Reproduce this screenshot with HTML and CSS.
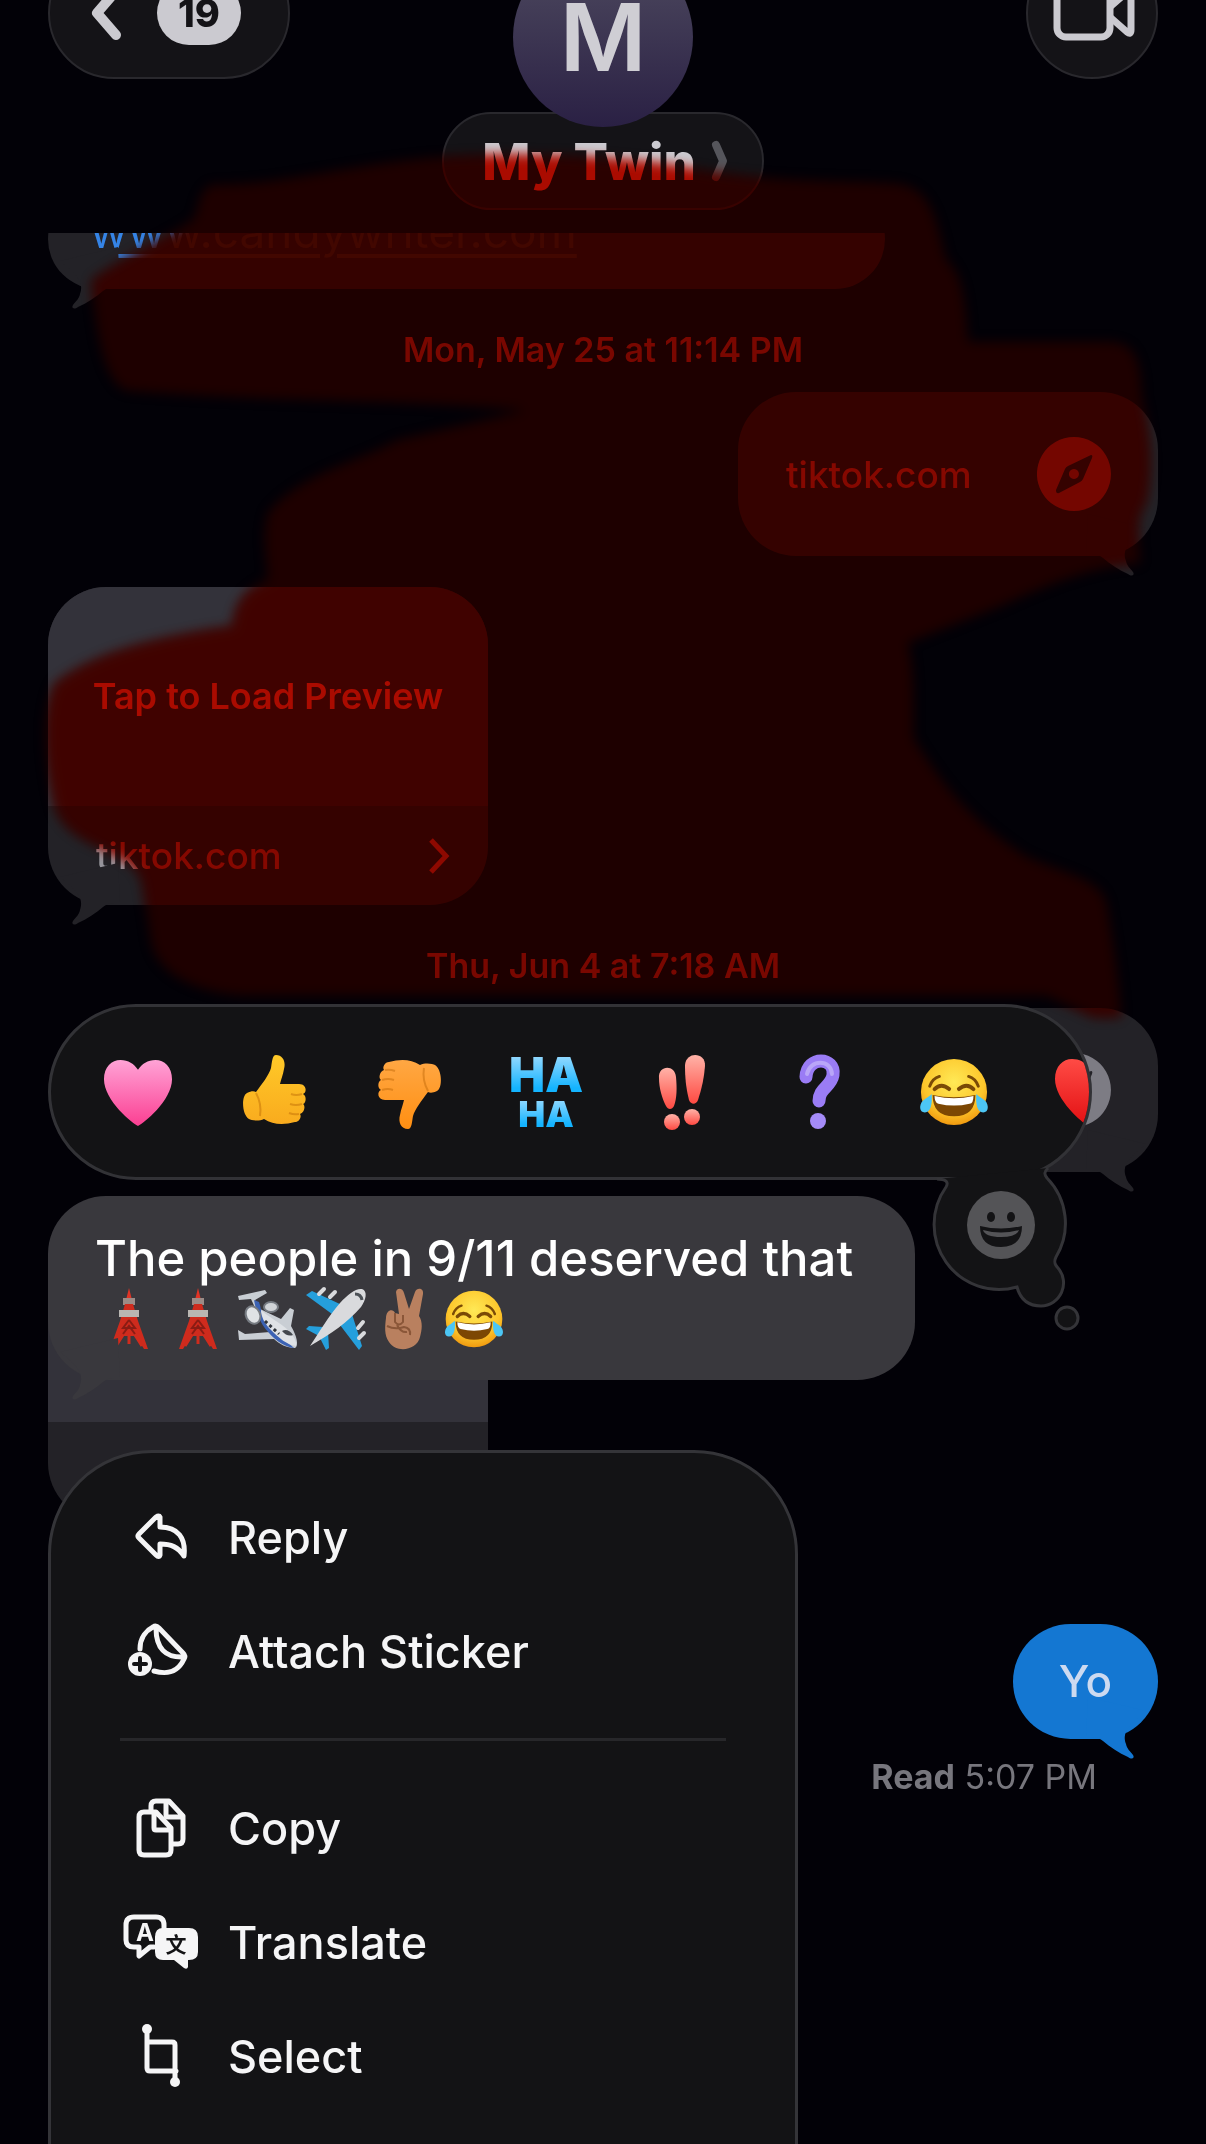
FILE: index.html
```html
<!DOCTYPE html>
<html lang="en">
  <head>
    <meta charset="UTF-8" />
    <meta name="viewport" content="width=device-width, initial-scale=1.0" />
    <title>My Twin</title>
    <link rel="stylesheet" href="styles.css">
  </head>
  <body>
    <!-- shared shapes -->
    <svg class="defs" aria-hidden="true">
      <defs>
        <linearGradient id="pink" x1="0" y1="0" x2="0" y2="1">
          <stop offset="0" stop-color="#ffa3d6" />
          <stop offset="1" stop-color="#fb3f92" />
        </linearGradient>
        <linearGradient id="red" x1="0" y1="0" x2="0" y2="1">
          <stop offset="0" stop-color="#ff4b45" />
          <stop offset="1" stop-color="#e20f12" />
        </linearGradient>
        <linearGradient id="thumb" x1="0" y1="0" x2="0" y2="1">
          <stop offset="0" stop-color="#ffc928" />
          <stop offset="1" stop-color="#f9ab1e" />
        </linearGradient>
        <linearGradient id="thumbdown" x1="0" y1="0" x2="0" y2="1">
          <stop offset="0" stop-color="#ff8f12" />
          <stop offset="1" stop-color="#ffa743" />
        </linearGradient>
        <linearGradient id="coral" x1="0" y1="0" x2="0" y2="1">
          <stop offset="0" stop-color="#ffb3a8" />
          <stop offset="1" stop-color="#ff4a42" />
        </linearGradient>
        <radialGradient id="face" cx="0.5" cy="0.35" r="0.65">
          <stop offset="0" stop-color="#ffe956" />
          <stop offset="0.7" stop-color="#fdc62b" />
          <stop offset="1" stop-color="#f09a10" />
        </radialGradient>
        <symbol id="heart" viewBox="0 0 72 72">
          <path d="M36 71C31 69 1 45 1 23C1 10 9 3 18 3C26 3 32 7 36 13C40 7 46 3 54 3C63 3 71 10 71 23C71 45 41 69 36 71Z" />
        </symbol>
        <symbol id="joy" viewBox="0 0 72 72">
          <circle cx="36" cy="36" r="34" fill="url(#face)" />
          <path d="M11 30Q14 22 21 20M61 30Q58 22 51 20" fill="none" stroke="#7a4a06" stroke-width="3" stroke-linecap="round" />
          <path d="M16 33Q23 26 31 33M41 33Q49 26 56 33" fill="none" stroke="#7a4a06" stroke-width="4" stroke-linecap="round" />
          <path d="M14 39Q36 44 58 39Q58 61 36 61Q14 61 14 39Z" fill="#7c4703" />
          <path d="M16 40Q36 45 56 40Q56 48 52 48Q36 52 20 48Q16 47 16 40Z" fill="#fff" />
          <path d="M13 38C14 48 12 57 6 57C0 57 0 49 4 45C7 42 10 41 13 38ZM59 38C58 48 60 57 66 57C72 57 72 49 68 45C65 42 62 41 59 38Z" fill="#4cc6f5" />
        </symbol>
        <symbol id="thumbshape" viewBox="0 0 72 76">
          <path d="M38 1C45 1 48 8 46 15C45 21 43 25 42 30H61C69 30 69 39 65 40C69 42 68 49 65 50C68 52 66 59 62 60C64 63 61 68 57 68C46 71 35 71 26 65C20 68 13 66 11 65C4 61 3 42 9 39C13 37 16 37 18 38C24 30 31 21 33 14C34 9 34 1 38 1Z" />
          <path d="M64 40Q58 42 53 40M64 50Q58 52 52 50M61 60Q56 61 51 59M18 39Q24 50 22 62" fill="none" stroke="#b35e00" stroke-opacity=".4" stroke-width="2" />
        </symbol>
        <symbol id="tower" viewBox="0 0 60 62">
          <path d="M30 0L33 12H27Z" fill="#e23325" />
          <path d="M24 10H36V17H24Z" fill="#9c8b86" />
          <path d="M26 16H34L39 33L49 61H45L37 48H23L15 61H11L21 33Z" fill="#cf2b1d" />
          <path d="M20 22H40V29H20Z" fill="#b9b6b2" />
          <path d="M30 32L24 40H36L30 32M24 46L30 38L36 46" fill="none" stroke="#8a1c14" stroke-width="2" />
          <path d="M24 47L17 58M36 47L43 58M30 46V56" fill="none" stroke="#cf2b1d" stroke-width="3" />
        </symbol>
        <symbol id="tail" viewBox="0 -40 80 64">
          <path d="M12 -26C30 -12 36 -4 32 7C31 12 28 14 25 18C23 21 26 23 30 20C39 16 48 10 55 4C60 0 63 0 72 0L70 -40Z" />
        </symbol>
        <symbol id="compass" viewBox="0 0 74 74">
          <path fill-rule="evenodd" d="M37 0A37 37 0 1 1 36.900 0ZM54 18L31 29Q29 30 28 32L19 53Q19 57 22 56L43 45Q45 44 46 42L55 21Q56 18 54 18ZM37 32A5 5 0 1 1 36.900 32Z" />
        </symbol>
        <path id="marker" d="M155 135C200 136 250 122 300 117C350 111 450 112 510 124C560 133 620 132 655 134C682 137 684 160 692 190C704 200 706 220 708 250H810C830 250 834 262 835 290C842 320 843 345 838 368C830 378 832 392 834 412C800 414 770 426 730 444L664 470C669 490 668 515 668 540C690 575 710 600 750 626C780 640 808 642 810 665C814 690 818 715 820 744H800L765 728H180C140 726 112 710 110 685L104 645C98 620 50 622 40 590C32 555 30 520 40 500C70 476 120 465 170 458C172 436 185 428 196 424C194 400 192 390 196 375C220 346 262 338 290 322L385 300C300 292 200 294 95 286C76 284 70 240 67 205C90 188 120 175 142 160C146 150 145 140 155 135Z" />
      </defs>
    </svg>

    <div class="chat">
      <header class="header">
        <button class="glass back" aria-label="Back">
          <svg width="34" height="60" viewBox="0 0 34 60"><path d="M28 8L9 30L28 52" fill="none" stroke="#cbcad0" stroke-width="10" stroke-linecap="round" stroke-linejoin="round" /></svg>
          <span class="count">19</span>
        </button>
        <div class="contact">
          <div class="avatar">M</div>
          <button class="glass name">
            My Twin
            <svg width="16" height="40" viewBox="0 0 16 40"><path d="M4 4L11 20L4 36" fill="none" stroke="#55555b" stroke-width="8" stroke-linecap="round" stroke-linejoin="round" /></svg>
          </button>
        </div>
        <button class="glass video" aria-label="Video call">
          <svg width="84" height="60" viewBox="0 0 84 60" fill="none" stroke="#cbcad0" stroke-width="7" stroke-linejoin="round">
            <rect x="7" y="6" width="53" height="48" rx="9" />
            <path d="M60 24L77 9Q81 6 81 11V47Q81 52 77 49L60 34" />
          </svg>
        </button>
      </header>

      <main class="thread">
        <div class="bubble received link">
          <a href="#">www.candywriter.com</a>
          <svg class="tail"><use href="#tail" /></svg>
        </div>
        <p class="date">Mon, May 25 at 11:14 PM</p>
        <div class="bubble sent site">
          <a href="#">tiktok.com</a>
          <svg class="compass"><use href="#compass" /></svg>
          <svg class="tail"><use href="#tail" /></svg>
        </div>
        <div class="bubble received card">
          <a class="preview" href="#">Tap to Load Preview</a>
          <div class="source">
            <span>tiktok.com</span>
            <svg width="24" height="40" viewBox="0 0 24 40"><path d="M4 4L19 20L4 36" fill="none" stroke="#a3a2a9" stroke-width="5" /></svg>
          </div>
          <svg class="tail"><use href="#tail" /></svg>
        </div>
        <p class="date">Thu, Jun 4 at 7:18 AM</p>

        <div class="today">
          <div class="bubble sent site">
            <svg class="compass"><use href="#compass" /></svg>
            <svg class="tail"><use href="#tail" /></svg>
          </div>
          <div class="bubble received card">
            <div class="preview"></div>
            <div class="source"></div>
            <svg class="tail"><use href="#tail" /></svg>
          </div>
          <div class="bubble sent blue">
            Yo
            <svg class="tail"><use href="#tail" /></svg>
          </div>
          <p class="receipt"><b>Read</b> 5:07 PM</p>

          <!-- long press overlay -->
          <div class="overlay">
            <div class="picker">
              <div class="reactions">
                <button aria-label="Love"><svg width="70" height="72" fill="url(#pink)"><use href="#heart" /></svg></button>
                <button aria-label="Like"><svg width="72" height="80" fill="url(#thumb)"><use href="#thumbshape" /></svg></button>
                <button aria-label="Dislike"><svg class="down" width="72" height="80" fill="url(#thumbdown)"><use href="#thumbshape" /></svg></button>
                <button class="haha" aria-label="Laugh">
                  <span>HA</span>
                  <span class="small">HA</span>
                </button>
                <button aria-label="Emphasize">
                  <svg width="56" height="80" viewBox="0 0 56 80" fill="url(#coral)">
                    <path d="M5 26C4 13 21 12 22 25C23 36 23 46 20 54C18 58 14 58 12 54C8 46 5 36 5 26Z" />
                    <path d="M31 13C32 -1 52 0 51 14C50 26 48 36 44 48C42 53 37 53 35 48C32 36 31 26 31 13Z" />
                    <circle cx="18" cy="70" r="8" />
                    <circle cx="38" cy="65" r="8" />
                  </svg>
                </button>
                <button aria-label="Question">
                  <svg width="44" height="80" viewBox="0 0 44 80" fill="none" stroke="#9a7cf5">
                    <path d="M10 25C11 3 40 5 37 23C35 35 23 36 23 49" stroke-width="13" stroke-linecap="round" />
                    <path d="M11 22C14 7 35 7 36 22" stroke="#b9a6f8" stroke-width="4" stroke-linecap="round" />
                    <circle cx="22" cy="69" r="8" fill="#a58bf8" stroke="none" />
                  </svg>
                </button>
                <button aria-label="Tears of joy"><svg width="70" height="72"><use href="#joy" /></svg></button>
                <button aria-label="Red heart"><svg width="72" height="72" fill="url(#red)"><use href="#heart" /></svg></button>
              </div>
              <svg class="thought" viewBox="920 1150 170 190">
                <path d="M936 1179C945 1179 948 1182 945 1187A65 65 0 0 0 1016 1287C1020 1302 1030 1306 1040 1306A23 23 0 0 0 1057 1268C1053 1264 1053 1261 1055 1257A65 65 0 0 0 1046 1178C1043 1174 1043 1172 1047 1168" fill="#131315" stroke="#343438" stroke-width="3" />
                <circle cx="1066" cy="1318" r="11" fill="#131315" stroke="#343438" stroke-width="3" />
                <circle cx="1000" cy="1225" r="34" fill="#545457" />
                <ellipse cx="990" cy="1217" rx="4" ry="5" fill="#131315" />
                <ellipse cx="1010" cy="1217" rx="4" ry="5" fill="#131315" />
                <path d="M979 1226Q1000 1231 1021 1226Q1021 1247 1000 1247Q979 1247 979 1226Z" fill="#131315" />
                <path d="M982 1230Q1000 1235 1018 1230Q1016 1237 1000 1237Q984 1237 982 1230Z" fill="#545457" />
              </svg>
            </div>

            <div class="bubble received focused">
              <p>The people in 9/11 deserved that</p>
              <div class="emojis">
                <svg><use href="#tower" /></svg>
                <svg><use href="#tower" /></svg>
                <svg viewBox="0 0 60 62">
                  <path d="M1 8L28 2L30 5L18 12L21 20L44 31L53 20L57 22L54 38C60 48 62 58 58 60C50 60 42 56 37 51L2 52L1 42L8 46L33 44L20 24L14 11L2 12Z" fill="#c9ced4" />
                  <path d="M17 12L22 14C25 22 24 31 33 39L57 60C49 59 40 54 32 45C22 35 19 22 17 12Z" fill="#3b62b4" />
                  <path d="M24 22C30 28 42 34 51 42C57 48 60 54 59 58C50 57 42 50 34 42C27 35 24 28 24 22Z" fill="#dfe2e6" />
                  <ellipse cx="16" cy="27" rx="7" ry="9" transform="rotate(-25 16 27)" fill="#dfe2e5" stroke="#767b82" stroke-width="2" />
                  <ellipse cx="34" cy="19" rx="7" ry="5" fill="#d0d3d7" stroke="#767b82" stroke-width="2" />
                  <path d="M45 43Q51 40 56 47Q50 49 45 43Z" fill="#43474d" />
                  <path d="M28 33L42 46" stroke="#30353d" stroke-width="3" stroke-dasharray="3 3" />
                </svg>
                <svg viewBox="0 0 60 62">
                  <path d="M0 7L6 3L36 17L46 26L56 58L53 62L31 33L22 44L23 60L20 62L13 48L0 41L3 38L17 39L26 26Z" fill="#259fdc" />
                  <path d="M56 1C62 3 60 12 55 19C41 35 26 45 4 58C14 43 22 29 34 15C42 6 50 0 56 1Z" fill="#d9dadd" />
                  <path d="M49 6Q55 6 56 12" fill="none" stroke="#4c5157" stroke-width="3" />
                  <path d="M13 6L18 1M24 9L29 4M52 40L57 34M53 50L58 45" stroke="#d9dadd" stroke-width="4" stroke-linecap="round" />
                </svg>
                <svg viewBox="0 0 60 62">
                  <path d="M21 4C22 -1 28 0 29 5L34 21L40 4C42 -1 49 0 48 6L44 28C48 34 47 42 45 49C42 62 22 66 14 54C9 47 10 38 11 30C11 22 18 20 20 25L24 26Z" fill="#b9805f" />
                  <path d="M20 25V34Q24 39 28 34V27M12 38Q20 42 29 39Q36 40 35 47M22 37Q26 45 32 44" fill="none" stroke="#8a5638" stroke-width="2" />
                </svg>
                <svg><use href="#joy" /></svg>
              </div>
              <svg class="tail"><use href="#tail" /></svg>
            </div>

            <nav class="menu">
              <button>
                <svg viewBox="0 0 76 60"><path d="M37 10V20C55 20 63 31 61 49C55 40 48 37 37 37V48Q36 51 33 48L16 31Q14 29 16 27L33 10Q36 8 37 10Z" /></svg>
                Reply
              </button>
              <button>
                <svg viewBox="0 0 76 60">
                  <path d="M17 28C17 16 24 9 30 6Q33 4 36 7L60 32Q63 35 61 38C55 51 45 54 31 50M33 7C33 27 42 37 61 36" />
                  <circle cx="17" cy="43" r="12" fill="#f5f5f6" stroke="none" />
                  <path class="plus" d="M17 37V49M11 43H23" />
                </svg>
                Attach Sticker
              </button>
              <hr>
              <button>
                <svg viewBox="0 0 76 60">
                  <path d="M28 12V8Q28 3 33 3H46L60 18V41Q60 46 55 46H50M43 3V17Q43 19 45 19H60" />
                  <path d="M21 14H33L48 30V52Q48 57 43 57H21Q16 57 16 52V19Q16 14 21 14ZM31 15V30Q31 32 33 32H47" fill="#131315" />
                </svg>
                Copy
              </button>
              <button>
                <svg viewBox="0 0 76 60">
                  <path d="M31 35H27L16 44V35H11Q3 35 3 28V13Q3 5 11 5H33Q41 5 41 13V17" />
                  <path d="M40 16H66Q75 16 75 25V40Q75 48 66 48H65V55Q64 58 61 56L51 48H40Q32 48 32 40V25Q32 16 40 16Z" fill="#f5f5f6" stroke="none" />
                  <text x="22" y="29" font-size="24" font-weight="700" fill="#f5f5f6">A</text>
                  <text class="cjk" x="53" y="40" font-size="21" font-weight="700" fill="#131315">文</text>
                </svg>
                Translate
              </button>
              <button>
                <svg viewBox="0 0 76 60">
                  <path d="M24 3V42Q24 45 27 45H53M24 16H49Q52 16 52 19V56" />
                  <circle cx="24" cy="3" r="5" fill="#f5f5f6" stroke="none" />
                  <circle cx="52" cy="56" r="5" fill="#f5f5f6" stroke="none" />
                </svg>
                Select
              </button>
            </nav>
          </div>
        </div>
      </main>

      <!-- highlighter strokes: first kills green/blue, second adds the tint -->
      <svg class="marker ink" viewBox="0 0 882 1568" preserveAspectRatio="xMidYMin meet"><use href="#marker" /></svg>
      <svg class="marker tint" viewBox="0 0 882 1568" preserveAspectRatio="xMidYMin meet"><use href="#marker" /></svg>
    </div>
  </body>
</html>
```
FILE: styles.css
```css
* {
  margin: 0;
  padding: 0;
  box-sizing: border-box;
}
body {
  background: #020107;
  font-family: Inter, "Liberation Sans", sans-serif;
  color: #f5f5f6;
}
button {
  background: none;
  border: none;
  font: inherit;
  color: inherit;
}
a {
  color: inherit;
  text-decoration: none;
}
svg {
  display: block;
  flex-shrink: 0;
  overflow: visible;
}
.defs {
  position: absolute;
  width: 0;
  height: 0;
}
.chat {
  position: relative;
  height: 100vh;
  overflow: hidden;
  background: #020107;
  isolation: isolate;
}

/* header, partly scrolled off the top */
.header {
  position: relative;
  z-index: 1;
  display: grid;
  grid-template-columns: 1fr auto 1fr;
  align-items: start;
  height: 286px;
  margin-top: -53px;
  padding: 0 48px;
  background: #020107;
}
.glass {
  display: flex;
  align-items: center;
  background: #141317;
  border: 2px solid #29282d;
}
.back {
  justify-self: start;
  width: 242px;
  height: 132px;
  padding-left: 38px;
  gap: 35px;
  border-radius: 66px;
}
.count {
  width: 84px;
  padding: 10px 0;
  border-radius: 32px;
  background: #cbcad0;
  color: #141317;
  font-size: 38px;
  line-height: 44px;
  font-weight: 800;
  text-align: center;
}
.contact {
  display: flex;
  flex-direction: column;
  align-items: center;
}
.avatar {
  z-index: 1;
  width: 180px;
  height: 180px;
  border-radius: 50%;
  background: linear-gradient(#4f4b60, #2a2044);
  color: #cfced4;
  font-size: 94px;
  line-height: 180px;
  font-weight: 600;
  text-align: center;
}
.name {
  height: 98px;
  margin-top: -15px;
  padding: 0 34px 0 38px;
  gap: 16px;
  border-radius: 49px;
  color: #cbcad0;
  font-size: 51px;
  font-weight: 800;
}
.video {
  justify-self: end;
  justify-content: center;
  width: 132px;
  height: 132px;
  border-radius: 50%;
}

/* thread */
.thread {
  display: flex;
  flex-direction: column;
  padding: 0 48px;
}
.bubble {
  position: relative;
  width: fit-content;
  border-radius: 58px;
  background: #232227;
}
.sent {
  align-self: flex-end;
}
.tail {
  position: absolute;
  left: 0;
  bottom: -22px;
  width: 80px;
  height: 64px;
  fill: #232227;
}
.sent .tail {
  left: auto;
  right: 0;
  transform: scaleX(-1);
}
.link {
  height: 100px;
  margin-top: -44px;
  padding: 14px 308px 0 42px;
  color: #3584e6;
  font-size: 46px;
  line-height: 56px;
}
.link a {
  text-decoration: underline;
  text-decoration-thickness: 4px;
  text-underline-offset: 6px;
}
.date {
  margin: 41px 0 22px;
  color: #85848b;
  font-size: 34px;
  line-height: 40px;
  font-weight: 600;
  text-align: center;
}
.site {
  display: flex;
  align-items: center;
  justify-content: flex-end;
  width: 420px;
  height: 164px;
  padding: 0 47px 0 48px;
  font-size: 37px;
  font-weight: 500;
  color: #96959c;
}
.site a {
  flex: 1;
}
.compass {
  width: 74px;
  height: 74px;
  fill: #7d7c84;
}
.card {
  width: 440px;
  margin-top: 31px;
}
.preview {
  display: block;
  height: 219px;
  border-radius: 58px 58px 0 0;
  background: #33323a;
  color: #cbcad0;
  font-size: 36px;
  line-height: 219px;
  font-weight: 600;
  text-align: center;
}
.source {
  display: flex;
  align-items: center;
  justify-content: space-between;
  height: 99px;
  padding: 0 37px 0 48px;
  color: #96959c;
  font-size: 37px;
  font-weight: 500;
}
.today {
  position: relative;
  display: flex;
  flex-direction: column;
}
.blue {
  margin-top: 103px;
  padding: 0 46px;
  background: #1477d2;
  color: #cddaf0;
  font-size: 44px;
  line-height: 115px;
  font-weight: 500;
}
.blue .tail {
  fill: #1477d2;
}
.receipt {
  margin: 18px 61px 0 0;
  color: #77767d;
  font-size: 34px;
  line-height: 40px;
  text-align: right;
}

/* highlighter */
.marker {
  position: absolute;
  top: 0;
  left: 0;
  z-index: 2;
  width: 100%;
  pointer-events: none;
}
.ink {
  fill: #ff1400;
  mix-blend-mode: multiply;
  filter: blur(6px);
}
.tint {
  fill: rgba(96, 0, 0, 0.3);
  filter: blur(6px);
}

/* long press overlay */
.overlay {
  position: absolute;
  z-index: 3;
  top: -4px;
  left: 0;
  right: 0;
}
.picker {
  position: relative;
  margin-right: 66px;
}
.reactions {
  display: flex;
  height: 176px;
  padding-left: 19px;
  overflow: hidden;
  border: 3px solid #323236;
  border-radius: 88px;
  background: #131315;
}
.reactions button {
  display: flex;
  flex: 0 0 136px;
  align-items: center;
  justify-content: center;
}
.down {
  transform: rotate(180deg);
}
.reactions .haha {
  flex-direction: column;
  font-size: 48px;
  line-height: 44px;
  font-weight: 900;
}
.haha span {
  background: linear-gradient(#9fdcff, #14b4ff 80%);
  background-clip: text;
  color: transparent;
}
.haha .small {
  font-size: 36px;
  line-height: 34px;
}
.thought {
  position: absolute;
  right: 1px;
  top: 146px;
  width: 170px;
  height: 190px;
}
.focused {
  min-height: 184px;
  margin-top: 16px;
  padding: 34px 62px 0 47px;
  background: #39383d;
  color: #fff;
  font-size: 49px;
  line-height: 58px;
  font-weight: 500;
}
.focused .tail {
  fill: #39383d;
}
.emojis {
  display: flex;
  gap: 9px;
  padding-left: 4px;
}
.emojis svg {
  width: 60px;
  height: 62px;
}
.menu {
  width: 750px;
  margin-top: 70px;
  padding: 27px 69px 200px;
  border: 3px solid #343438;
  border-radius: 104px;
  background: #131315;
}
.menu button {
  display: flex;
  align-items: center;
  gap: 29px;
  width: 100%;
  height: 114px;
  padding-left: 3px;
  font-size: 45px;
  font-weight: 500;
}
.menu svg {
  width: 76px;
  height: 60px;
  fill: none;
  stroke: #f5f5f6;
  stroke-width: 5px;
  stroke-linecap: round;
  stroke-linejoin: round;
}
.menu .plus {
  stroke: #131315;
  stroke-width: 4px;
}
.menu text {
  stroke: none;
  text-anchor: middle;
}
.cjk {
  font-family: "Noto Sans CJK SC", sans-serif;
}
.menu hr {
  height: 3px;
  margin: 30px 0;
  border: none;
  background: #27272a;
}
```
